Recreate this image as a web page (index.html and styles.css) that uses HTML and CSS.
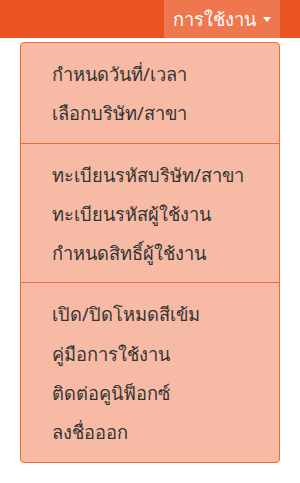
FILE: index.html
```html
<!DOCTYPE html>
<html lang="th">
<head>
  <meta charset="UTF-8" />
  <meta name="viewport" content="width=device-width, initial-scale=1" />
  <title>การใช้งาน</title>
  <link rel="stylesheet" href="styles.css">
</head>
<body>
  <header class="top-bar">
    <a href="#" class="nav-toggle">การใช้งาน <span class="caret"></span></a>
  </header>

  <div class="menu">
    <div class="menu-group">
      <a href="#" class="menu-item">กำหนดวันที่/เวลา</a>
      <a href="#" class="menu-item">เลือกบริษัท/สาขา</a>
    </div>
    <div class="menu-group">
      <a href="#" class="menu-item">ทะเบียนรหัสบริษัท/สาขา</a>
      <a href="#" class="menu-item">ทะเบียนรหัสผู้ใช้งาน</a>
      <a href="#" class="menu-item">กำหนดสิทธิ์ผู้ใช้งาน</a>
    </div>
    <div class="menu-group">
      <a href="#" class="menu-item">เปิด/ปิดโหมดสีเข้ม</a>
      <a href="#" class="menu-item">คู่มือการใช้งาน</a>
      <a href="#" class="menu-item">ติดต่อคูนิฟ็อกซ์</a>
      <a href="#" class="menu-item">ลงชื่อออก</a>
    </div>
  </div>
</body>
</html>
```

FILE: styles.css
```css
body {
  margin: 0;
  font-family: Tahoma, "Noto Sans", "DejaVu Sans", sans-serif;
  background: #fff;
  color: #333;
}

.top-bar {
  display: flex;
  justify-content: flex-end;
  height: 38px;
  padding-right: 20px;
  background-color: #e95420;
}

.nav-toggle {
  display: flex;
  align-items: center;
  width: 116px;
  padding-left: 9px;
  box-sizing: border-box;
  background-color: #ee7750;
  color: #fff;
  font-size: 18.3px;
  white-space: nowrap;
  text-decoration: none;
}

.caret {
  display: inline-block;
  margin-left: 7px;
  border-top: 5px solid #fff;
  border-left: 4px solid transparent;
  border-right: 4px solid transparent;
}

.menu {
  width: 260px;
  margin: 4px 0 0 20px;
  box-sizing: border-box;
  background-color: #f7bba5;
  border: 1px solid #ee6a3a;
  border-radius: 4px;
}

.menu-group {
  display: flex;
  flex-direction: column;
  padding: 11px 0 10px;
}

.menu-group + .menu-group {
  border-top: 1px solid #ee6a3a;
}

.menu-item {
  padding-left: 31px;
  line-height: 39.3px;
  font-size: 18.3px;
  white-space: nowrap;
  color: #333;
  text-decoration: none;
}
```
